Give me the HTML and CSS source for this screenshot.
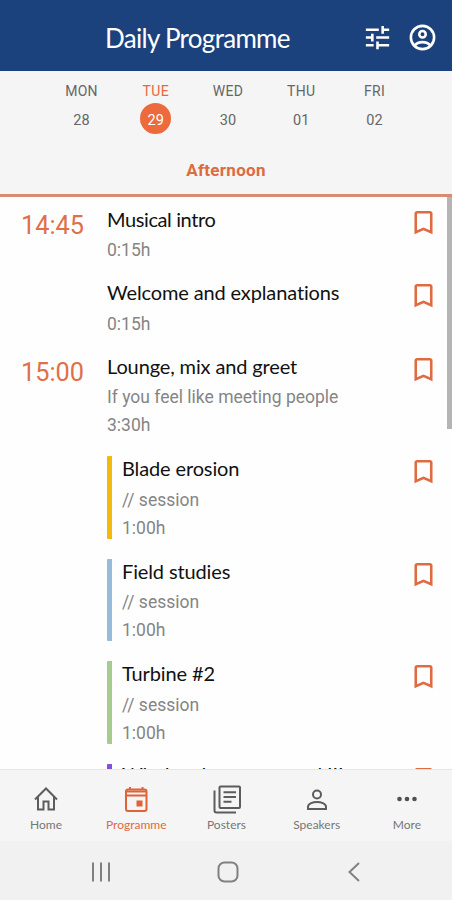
FILE: index.html
```
<!DOCTYPE html>
<html lang="en">
<head>
  <meta charset="UTF-8" />
  <meta name="viewport" content="width=device-width, initial-scale=1.0" />
  <title>Daily Programme</title>
  <link rel="stylesheet" href="styles.css">
</head>
<body>
  <!-- shared bookmark icon -->
  <svg class="defs" width="0" height="0">
    <symbol id="bookmark" viewBox="0 0 24 24">
      <path d="M17 3H7c-1.1 0-2 .9-2 2v16l7-3 7 3V5c0-1.1-.9-2-2-2zm0 15l-5-2.180-5 2.180V5h10v13z"/>
    </symbol>
  </svg>

  <header class="header">
    <h1>Daily Programme</h1>
    <div class="actions">
      <svg class="tune" viewBox="0 0 24 24"><path d="M3 17v2h6v-2H3zM3 5v2h10V5H3zm10 16v-2h8v-2h-8v-2h-2v6h2zM7 9v2H3v2h4v2h2V9H7zm14 4v-2H11v2h10zm-6-4h2V7h4V5h-4V3h-2v6z"/></svg>
      <svg class="account" viewBox="0 0 24 24"><g fill="none" stroke="#fff" stroke-width="2"><circle cx="12" cy="12" r="9"/><circle cx="12" cy="9.500" r="2.500"/><path d="M6 18.200c1.300-1.800 3.500-2.600 6-2.600s4.700.8 6 2.600"/></g></svg>
    </div>
  </header>

  <section class="days">
    <div class="week">
      <div class="day"><span>MON</span><b>28</b></div>
      <div class="day active"><span>TUE</span><b>29</b></div>
      <div class="day"><span>WED</span><b>30</b></div>
      <div class="day"><span>THU</span><b>01</b></div>
      <div class="day"><span>FRI</span><b>02</b></div>
    </div>
    <div class="period">Afternoon</div>
  </section>

  <main class="list">
    <div class="item">
      <div class="time">14:45</div>
      <div class="info"><h2 class="tight">Musical intro</h2><p>0:15h</p></div>
      <svg class="bookmark"><use href="#bookmark"/></svg>
    </div>
    <div class="item">
      <div class="time"></div>
      <div class="info"><h2>Welcome and explanations</h2><p>0:15h</p></div>
      <svg class="bookmark"><use href="#bookmark"/></svg>
    </div>
    <div class="item">
      <div class="time">15:00</div>
      <div class="info"><h2>Lounge, mix and greet</h2><p>If you feel like meeting people</p><p>3:30h</p></div>
      <svg class="bookmark"><use href="#bookmark"/></svg>
    </div>
    <div class="item">
      <div class="time"></div>
      <div class="info session yellow"><h2>Blade erosion</h2><p>// session</p><p>1:00h</p></div>
      <svg class="bookmark"><use href="#bookmark"/></svg>
    </div>
    <div class="item">
      <div class="time"></div>
      <div class="info session blue"><h2>Field studies</h2><p>// session</p><p>1:00h</p></div>
      <svg class="bookmark"><use href="#bookmark"/></svg>
    </div>
    <div class="item">
      <div class="time"></div>
      <div class="info session green"><h2>Turbine #2</h2><p>// session</p><p>1:00h</p></div>
      <svg class="bookmark"><use href="#bookmark"/></svg>
    </div>
    <div class="item">
      <div class="time"></div>
      <div class="info session purple"><h2>Wind and wave control III</h2></div>
      <svg class="bookmark"><use href="#bookmark"/></svg>
    </div>
    <div class="scrollbar"></div>
  </main>

  <nav class="tabs">
    <div class="tab">
      <svg viewBox="0 0 30 30"><path d="M4 15.500 15 4.500 26 15.500M7 13V25.500h5.500v-8h5v8H23V13"/></svg>
      <span>Home</span>
    </div>
    <div class="tab active">
      <svg viewBox="0 0 30 30"><rect x="5" y="5.500" width="20.500" height="21.500" rx="2"/><path d="M5 7.500h20.500M5 11.500h20.500M9 3v3M21.500 3v3"/><path class="solid" d="M15.500 16.500h6v6h-6z"/></svg>
      <span>Programme</span>
    </div>
    <div class="tab">
      <svg viewBox="0 0 30 30"><rect x="7.500" y="2.500" width="20.500" height="21.500" rx="1"/><path d="M2.500 6.500V26.500q0 2 2 2H24M11.500 8.200h12.500M11.500 13h12.500M11.500 17.800h8"/></svg>
      <span>Posters</span>
    </div>
    <div class="tab">
      <svg viewBox="0 0 30 30"><circle cx="15" cy="10.500" r="4"/><path d="M6 25v-2.200c0-3.400 5.200-4.800 9-4.800s9 1.400 9 4.800V25z"/></svg>
      <span>Speakers</span>
    </div>
    <div class="tab">
      <svg viewBox="0 0 30 30"><g class="dots"><circle cx="7.500" cy="15" r="2.300"/><circle cx="15" cy="15" r="2.300"/><circle cx="22.500" cy="15" r="2.300"/></g></svg>
      <span>More</span>
    </div>
  </nav>

  <footer class="system">
    <svg viewBox="0 0 24 24"><path d="M4 2.500v19M12 2.500v19M20 2.500v19"/></svg>
    <svg viewBox="0 0 24 24"><rect x="2.500" y="2.500" width="19" height="19" rx="6"/></svg>
    <svg viewBox="0 0 24 24"><path d="M17 3 7.500 12 17 21"/></svg>
  </footer>
</body>
</html>
```
FILE: styles.css
```
* {
  box-sizing: border-box;
}

body {
  margin: 0;
  height: 900px;
  display: flex;
  flex-direction: column;
  overflow: hidden;
  font-family: Roboto, "Liberation Sans", sans-serif;
  background: #fefefe;
}

h1, h2, p {
  margin: 0;
  font-weight: 400;
}

.defs {
  position: absolute;
}

.header {
  height: 71px;
  flex: none;
  display: flex;
  align-items: center;
  justify-content: space-between;
  padding: 4px 14px 0 105px;
  background: #1b427d;
  color: #fff;
}

.header h1 {
  font-family: Lato, sans-serif;
  font-size: 26px;
  letter-spacing: -0.7px;
  white-space: nowrap;
}

.actions {
  display: flex;
  align-items: center;
  gap: 14px;
}

.actions svg {
  width: 31px;
  height: 31px;
  fill: #fff;
}

.days {
  height: 126px;
  flex: none;
  background: #f5f5f5;
  border-bottom: 3px solid #da8a70;
}

.week {
  display: flex;
  justify-content: space-between;
  padding: 10px 41px 0 45px;
}

.day {
  width: 73px;
  display: flex;
  flex-direction: column;
  align-items: center;
  font-size: 14px;
  line-height: 20px;
  color: #666;
}

.day span {
  letter-spacing: 0.3px;
}

.day b {
  width: 31px;
  height: 31px;
  margin-top: 2px;
  border-radius: 50%;
  font-weight: 400;
  font-size: 14.5px;
  line-height: 35px;
  text-align: center;
}

.day.active {
  padding-left: 2px;
  color: #e8683c;
}

.day.active b {
  background: #ec6a3c;
  color: #fff;
}

.period {
  margin-top: 25px;
  line-height: 22px;
  font-size: 17px;
  letter-spacing: 0.3px;
  font-weight: 700;
  text-align: center;
  color: #dd6b40;
}

.list {
  position: relative;
  flex: 1;
  min-height: 0;
  overflow: hidden;
  padding: 9.5px 13px 0 21px;
}

.item {
  display: flex;
  margin-bottom: 20px;
}

.time {
  width: 86px;
  flex: none;
  padding-top: 5px;
  font-size: 25.3px;
  line-height: 28px;
  color: #df7049;
}

.info {
  flex: 1;
}

.info h2 {
  height: 26.6px;
  font-family: Lato, sans-serif;
  font-size: 20px;
  font-variant-ligatures: none;
  letter-spacing: -0.13px;
  line-height: 24.6px;
  color: #111;
}

.info h2.tight {
  letter-spacing: -0.4px;
}

.info p {
  margin-top: 6px;
  font-size: 17.5px;
  line-height: 24px;
  height: 23px;
  color: #858585;
}

.info h2 + p {
  margin-top: 5px;
  margin-bottom: -1px;
}

.info h2 + p:last-child {
  margin-bottom: 0;
  height: 22px;
}

.session {
  border-left: 5px solid;
  border-radius: 1px;
  padding-left: 10px;
}

.yellow {
  border-color: #f3b90d;
}

.blue {
  border-color: #97bbdc;
}

.green {
  border-color: #a7cb8d;
}

.purple {
  border-color: #8150e0;
}

.purple h2 {
  line-height: 20px;
}

.bookmark {
  width: 31px;
  height: 31px;
  flex: none;
  fill: #de6b42;
}

.scrollbar {
  position: absolute;
  top: 0;
  right: 0;
  width: 5px;
  height: 232px;
  background: #b5b5b5;
}

.tabs {
  height: 72px;
  flex: none;
  display: flex;
  padding-left: 1px;
  background: #f5f5f5;
  border-top: 1px solid #e6e6e6;
}

.tab {
  flex: 1;
  display: flex;
  flex-direction: column;
  align-items: center;
  padding-top: 14px;
  font-family: Lato, sans-serif;
  font-size: 12px;
  line-height: 16px;
  color: #757575;
}

.tab svg {
  width: 30px;
  height: 30px;
  margin-bottom: 3px;
  fill: none;
  stroke: #5c5c5c;
  stroke-width: 2;
}

.tab .dots {
  fill: #505050;
  stroke: none;
}

.tab.active {
  color: #df6a40;
}

.tab.active svg {
  stroke: #df6335;
}

.tab .solid {
  fill: #df6335;
  stroke: none;
}

.system {
  height: 59px;
  flex: none;
  display: flex;
  align-items: center;
  justify-content: space-between;
  padding: 3px 86px 0 89px;
  background: #f1f1f1;
}

.system svg {
  width: 24px;
  height: 24px;
  fill: none;
  stroke: #818181;
  stroke-width: 2;
}
```
